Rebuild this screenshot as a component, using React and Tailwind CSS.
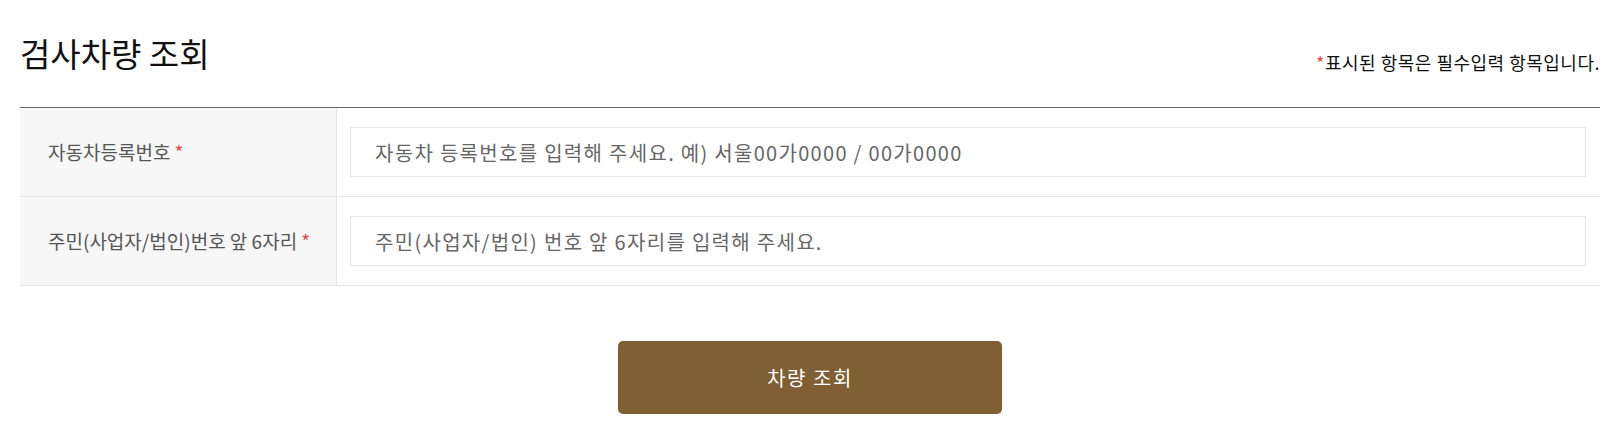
import React from 'react';

const FONT = { fontFamily: '"Noto Sans CJK KR", "Noto Sans", sans-serif' };

function FormRow({ label, placeholder }) {
  return (
    <div className="flex border-b border-[#e5e5e5]">
      <div className="flex w-[317px] shrink-0 items-center border-r border-[#e5e5e5] bg-[#f7f7f7] pl-[28px] text-[19px] text-[#555]">
        <span>{label}</span>
        <span className="ml-[4px] text-[#e5484d]">*</span>
      </div>
      <div className="flex-1 py-[19px] pl-[13px] pr-[14px]">
        <input
          type="text"
          placeholder={placeholder}
          className="h-[50px] w-full border border-[#e5e5e5] bg-white px-[24px] text-[20px] tracking-[1.3px] text-[#333] outline-none placeholder:text-[#666]"
          style={FONT}
        />
      </div>
    </div>
  );
}

export default function App() {
  return (
    <div className="min-h-[443px] bg-white" style={FONT}>
      <div className="ml-[20px] w-[1580px] pt-[29px]">
        <div className="flex items-end justify-between pb-[30px]">
          <h2 className="text-[33px] leading-[48px] font-normal text-[#111]">검사차량 조회</h2>
          <p className="mb-[2px] text-[18px] leading-[26px] tracking-[0.5px] text-[#111]">
            <span className="text-[#e5484d]">*</span>표시된 항목은 필수입력 항목입니다.
          </p>
        </div>
        <div className="border-t border-[#666]">
          <FormRow label="자동차등록번호" placeholder="자동차 등록번호를 입력해 주세요. 예) 서울00가0000 / 00가0000" />
          <FormRow label="주민(사업자/법인)번호 앞 6자리" placeholder="주민(사업자/법인) 번호 앞 6자리를 입력해 주세요." />
        </div>
        <div className="flex justify-center pt-[55px]">
          <button
            type="button"
            className="h-[73px] w-[384px] rounded-[5px] bg-[#7f5f33] text-[20px] tracking-[1.5px] text-white"
            style={FONT}
          >
            차량 조회
          </button>
        </div>
      </div>
    </div>
  );
}
